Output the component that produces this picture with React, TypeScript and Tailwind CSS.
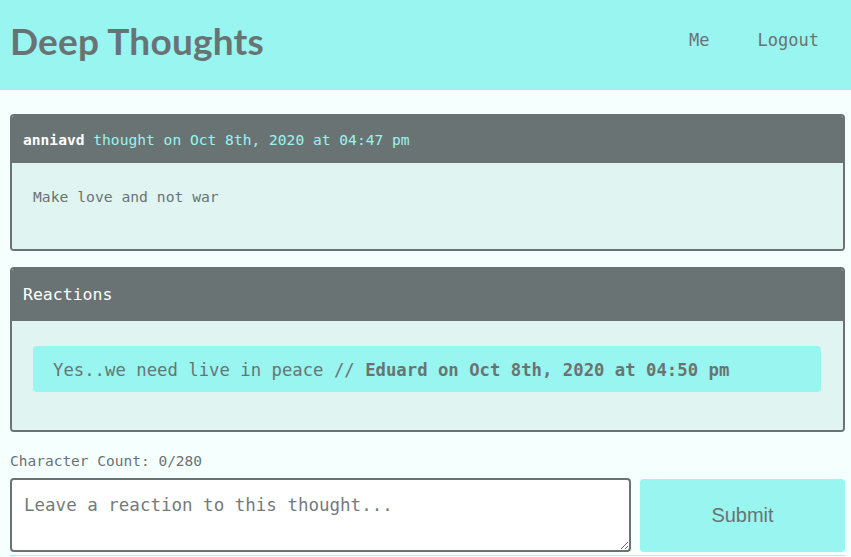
const mono = "font-['DejaVu_Sans_Mono','Liberation_Mono',monospace]";

function Header() {
  return (
    <header className="h-[90px] bg-[#98f5ef] flex items-center justify-between pl-[10px] pr-[32px] pb-[10px]">
      <h1 className="font-['Lato','Open_Sans',sans-serif] font-bold text-[37px] text-[#6a7373] tracking-[0.2px] leading-none">
        Deep Thoughts
      </h1>
      <nav className={`${mono} flex gap-[48px] text-[17px] text-[#6a7373] pt-[2px]`}>
        <a>Me</a>
        <a>Logout</a>
      </nav>
    </header>
  );
}

export default function App() {
  return (
    <div className={`min-h-[557px] bg-[#f4fffe] ${mono}`}>
      <Header />
      <main className="pl-[10px] pr-[6px] pt-[24px]">
        <div className="rounded-[4px] border-2 border-[#6a7373] overflow-hidden">
          <div className="bg-[#6a7373] h-[47px] flex items-center px-[11px] text-[14.6px]">
            <span className="font-bold text-white">anniavd</span>
            <span className="text-[#98f5ef]">&nbsp;thought on Oct 8th, 2020 at 04:47 pm</span>
          </div>
          <div className="bg-[#e0f4f2] h-[86px] px-[21px] pt-[23px] text-[14.7px] text-[#6a7373]">
            Make love and not war
          </div>
        </div>

        <div className="mt-[16px] rounded-[4px] border-2 border-[#6a7373] overflow-hidden">
          <div className="bg-[#6a7373] h-[52px] flex items-center px-[11px] text-[16.5px] text-white">
            Reactions
          </div>
          <div className="bg-[#e0f4f2] pl-[21px] pr-[22px] pt-[25px] pb-[38px]">
            <div className="bg-[#98f5ef] rounded-[4px] h-[46px] flex items-center pl-[20px] pr-[20px] pt-[3px] text-[17.3px] text-[#6a7373]">
              <span>Yes..we need live in peace //&nbsp;</span>
              <span className="font-bold">Eduard on Oct 8th, 2020 at 04:50 pm</span>
            </div>
          </div>
        </div>

        <p className="mt-[19px] text-[14.5px] text-[#6a7373]">Character Count: 0/280</p>
        <form className="mt-[5px] flex gap-[9px] pb-[3px] border-b border-[#98f5ef]">
          <textarea
            className={`${mono} w-[621px] h-[74px] bg-white border-2 border-[#6a7373] rounded-[4px] px-[12px] py-[12px] text-[17.5px] text-[#6a7373] placeholder:text-[#737b7b] outline-none`}
            placeholder="Leave a reaction to this thought..."
          />
          <button
            type="button"
            className="flex-1 mt-[1px] h-[73px] bg-[#98f5ef] rounded-[4px] font-['Liberation_Sans',Arial,sans-serif] text-[20px] text-[#6a7373]"
          >
            Submit
          </button>
        </form>
      </main>
    </div>
  );
}
